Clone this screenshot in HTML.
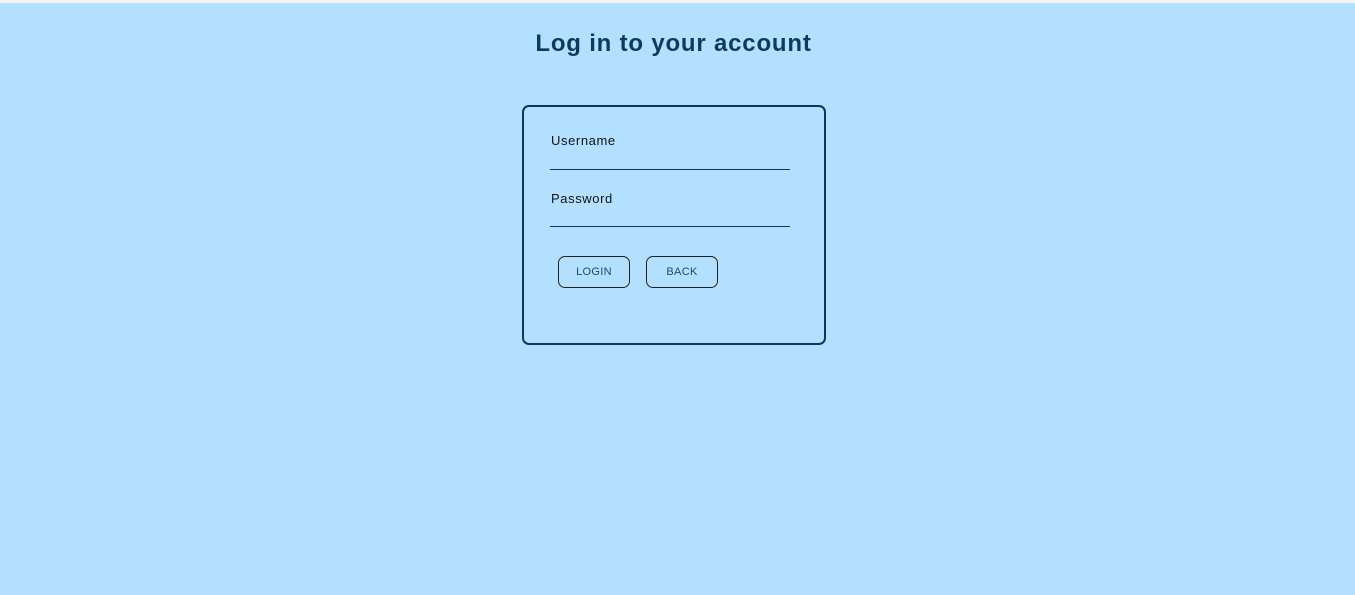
<!DOCTYPE html><html><head><style>
body{margin:0;width:1355px;height:595px;background:#b3e0ff;font-family:"Liberation Sans",sans-serif;position:relative;overflow:hidden}
.top{position:absolute;left:0;top:0;width:1355px;height:3px;background:#f4f6ee}
h1{position:absolute;left:-4px;width:1355px;top:29px;margin:0;text-align:center;font-size:24px;letter-spacing:0.8px;font-weight:bold;color:#0d3b5c;line-height:30px}
.box{position:absolute;left:522px;top:105px;width:300px;height:236px;border:2px solid #0a3a5a;border-radius:7px}
.lbl{position:absolute;left:551px;font-size:13px;letter-spacing:0.6px;color:#111}
.line{position:absolute;left:550px;width:240px;height:1px;background:#0a3a5a}
.btn{position:absolute;top:256px;width:70px;height:30px;border:1px solid #222;border-radius:7px;font-size:11px;letter-spacing:0.3px;color:#1b4a6a;text-align:center;line-height:31px}
</style></head><body>
<div class="top"></div>
<h1>Log in to your account</h1>
<div class="box"></div>
<div class="lbl" style="top:133px">Username</div>
<div class="line" style="top:169px"></div>
<div class="lbl" style="top:191px">Password</div>
<div class="line" style="top:226px"></div>
<div class="btn" style="left:558px">LOGIN</div>
<div class="btn" style="left:646px">BACK</div>
</body></html>
